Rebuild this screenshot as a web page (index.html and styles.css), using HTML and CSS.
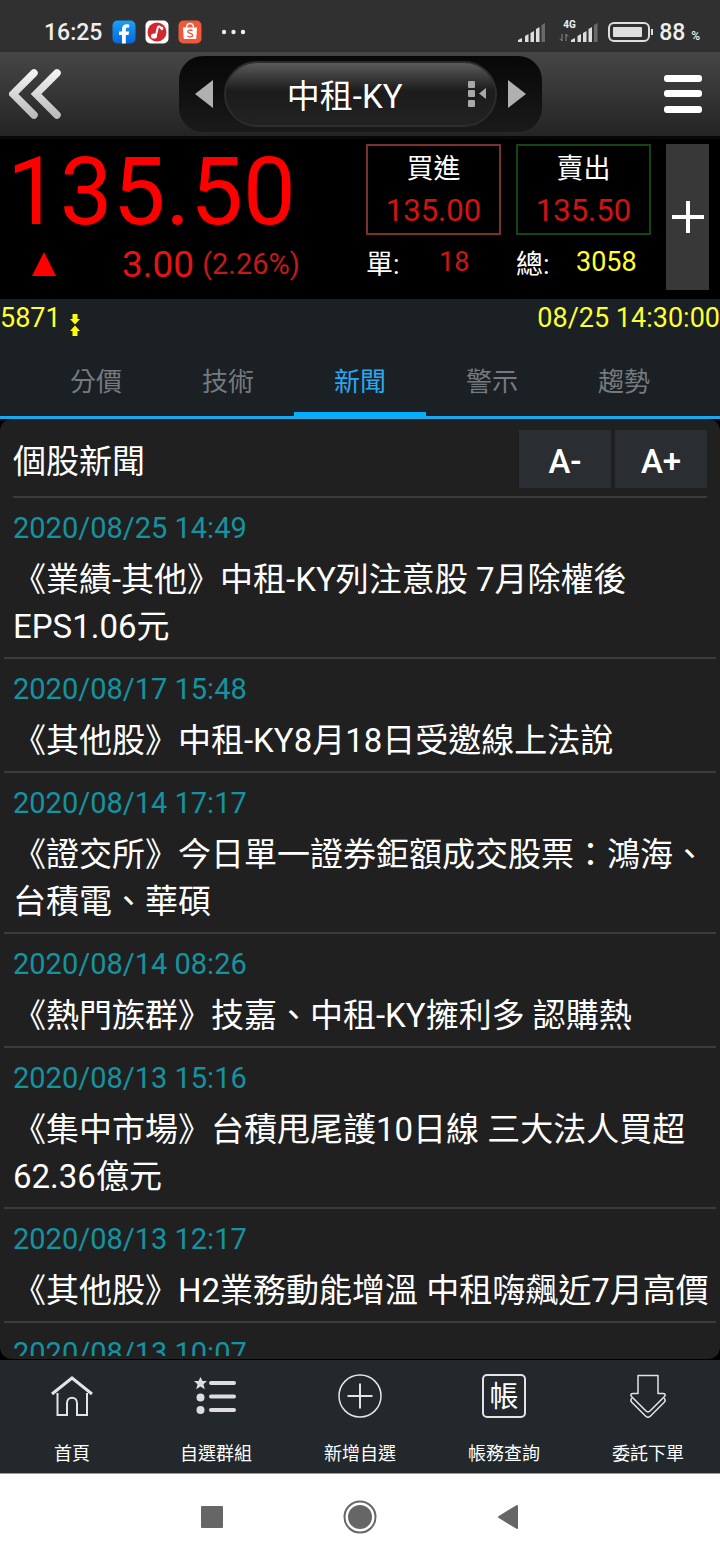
FILE: index.html
```html
<!DOCTYPE html>
<html lang="zh-Hant">
<head>
<meta charset="utf-8">
<meta name="viewport" content="width=device-width, initial-scale=1">
<title>中租-KY 個股新聞</title>
<link rel="stylesheet" href="styles.css">
</head>
<body>
<div class="status">
  <span class="clock">16:25</span>
  <svg class="app" viewBox="0 0 24 24" aria-hidden="true"><defs><linearGradient id="fb" x1="0" y1="0" x2="0" y2="1"><stop offset="0" stop-color="#18a2f6"/><stop offset="1" stop-color="#0866dc"/></linearGradient></defs><rect x=".5" y=".5" width="23" height="23" rx="5" fill="url(#fb)"/><path d="M10 23.5v-8.500H7v-3.500h3V9c0-3.200 1.800-4.800 4.800-4.800l2.400.2v3h-1.600c-1.400 0-1.800.8-1.800 1.800v2.300h3.300l-.6 3.500h-2.700v8.500z" fill="#fff"/></svg>
  <svg class="app" viewBox="0 0 24 24" aria-hidden="true"><rect x=".5" y=".5" width="23" height="23" rx="5" fill="#fff"/><circle cx="12" cy="12" r="9.500" fill="#d3272f"/><ellipse cx="9" cy="16" rx="3" ry="2.600" fill="#fff"/><path d="M10.800 16 12.800 7.500c.2-1 1.400-1.500 2.200-.6l2.500 3" fill="none" stroke="#fff" stroke-width="2"/><circle cx="17" cy="8" r="1.300" fill="#fff"/></svg>
  <svg class="app" viewBox="0 0 24 24" aria-hidden="true"><rect x=".5" y=".5" width="23" height="23" rx="5" fill="#f0583a"/><path d="M5 7.500h14l-.8 11.500H5.800z" fill="#fff"/><path d="M8.500 8c0-6 7-6 7 0" fill="none" stroke="#fff" stroke-width="1.300"/><path d="M14.500 10.800c-1.500-1.300-4.800-1-4.700 1 .1 2 5 1.300 4.900 3.600-.1 2-3.500 2-5.300.6" fill="none" stroke="#e8543a" stroke-width="1.300"/></svg>
  <svg class="dots" viewBox="0 0 26 24" aria-hidden="true"><g fill="#eee"><circle cx="3" cy="12" r="2.200"/><circle cx="12.500" cy="12" r="2.200"/><circle cx="22" cy="12" r="2.200"/></g></svg>
  <svg class="signal" viewBox="0 0 28 20" aria-hidden="true"><g fill="#ddd"><path d="M0 20v-2l4-2v4zM7 20v-6l3.500-2v8zM12.500 20v-9l3.500-2v11zM18 20V7l3.500-2v15z"/><path d="M23.500 20V3L27 1v19z" fill="#6a6a6a"/></g></svg>
  <span class="cell"><span class="gen">4G</span><svg class="signal" viewBox="0 0 39 20" aria-hidden="true"><path d="M3 19v-7M3 19l-2-2.500M7 12v7M7 12l2 2.500" stroke="#888" fill="none"/><g fill="#ddd"><path d="M12 20v-2l4-2v4zM18.500 20v-6l3.500-2v8zM24 20v-9l3.500-2v11zM29.500 20V7L33 5v15z"/><path d="M35 20V3l3.500-2v19z" fill="#6a6a6a"/></g></svg></span>
  <svg class="battery" viewBox="0 0 46 20" aria-hidden="true"><rect x="1" y="1" width="40" height="18" rx="5" fill="none" stroke="#ddd" stroke-width="2"/><rect x="5" y="5" width="29" height="10" rx="1" fill="#ddd"/><rect x="43" y="7" width="2" height="6" fill="#ddd"/></svg>
  <span class="charge">88 <small>%</small></span>
</div>

<header class="topbar">
  <button class="back" aria-label="返回"><svg width="54" height="52" viewBox="0 0 54 52"><defs><linearGradient id="sv" x1="0" y1="0" x2="0" y2="1"><stop offset="0" stop-color="#f2f2f2"/><stop offset="1" stop-color="#bdbdbd"/></linearGradient></defs><path d="M25 5 4 26 25 47M48 5 27 26 48 47" fill="none" stroke="url(#sv)" stroke-width="7.500" stroke-linecap="round" stroke-linejoin="miter"/></svg></button>
  <div class="switcher">
    <button aria-label="上一檔"><svg width="18" height="28" viewBox="0 0 18 28"><path d="M18 0v28L0 14z" fill="#b0b0b0"/></svg></button>
    <button class="pill"><span>中租-KY</span><svg width="20" height="28" viewBox="0 0 20 28" aria-hidden="true"><g fill="#a8a8a8"><rect x="1" y="1" width="7" height="7" rx="1"/><rect x="1" y="10" width="7" height="7" rx="1"/><rect x="1" y="20" width="7" height="7" rx="1"/><path d="M19 8v11l-7-5.500z"/></g></svg></button>
    <button aria-label="下一檔"><svg width="18" height="28" viewBox="0 0 18 28"><path d="M0 0v28l18-14z" fill="#b0b0b0"/></svg></button>
  </div>
  <button class="menu" aria-label="選單"><svg width="38" height="40" viewBox="0 0 38 40"><g fill="#fff"><rect y="1" width="38" height="7" rx="3"/><rect y="16" width="38" height="7" rx="3"/><rect y="32" width="38" height="7" rx="3"/></g></svg></button>
</header>

<section class="quote">
  <div class="last">
    <div class="price">135.50</div>
    <div class="change"><svg width="24" height="24" viewBox="0 0 24 24" aria-label="上漲"><path d="M12 0l12 24H0z" fill="#f00"/></svg><span class="diff">3.00</span><span class="pct">(2.26%)</span></div>
  </div>
  <div class="book">
    <button class="side buy"><span>買進</span><b>135.00</b></button>
    <div class="volume"><span>單:</span><b class="up">18</b></div>
  </div>
  <div class="book">
    <button class="side sell"><span>賣出</span><b>135.50</b></button>
    <div class="volume"><span>總:</span><b class="total">3058</b></div>
  </div>
  <button class="add" aria-label="加入"><svg width="32" height="32" viewBox="0 0 32 32"><path d="M0 16h32M16 0v32" stroke="#fff" stroke-width="4"/></svg></button>
</section>

<div class="info">
  <span>5871</span>
  <svg width="10" height="22" viewBox="0 0 10 22" aria-hidden="true"><path d="M2.500 0h5v5H10l-5 5.500L0 5h2.500zM2.500 22h5v-5H10l-5-5.500L0 17h2.500z" fill="#ff0"/></svg>
  <time>08/25 14:30:00</time>
</div>

<nav class="tabs">
  <button>分價</button>
  <button>技術</button>
  <button class="active">新聞</button>
  <button>警示</button>
  <button>趨勢</button>
</nav>

<main class="stage">
  <div class="panel">
    <div class="head">
      <h1>個股新聞</h1>
      <button>A-</button>
      <button>A+</button>
    </div>
    <div class="list">
      <article><time>2020/08/25 14:49</time><h2>《業績-其他》中租-KY列注意股 7月除權後EPS1.06元</h2></article>
      <article><time>2020/08/17 15:48</time><h2>《其他股》中租-KY8月18日受邀線上法說</h2></article>
      <article><time>2020/08/14 17:17</time><h2>《證交所》今日單一證券鉅額成交股票：鴻海、台積電、華碩</h2></article>
      <article><time>2020/08/14 08:26</time><h2>《熱門族群》技嘉、中租-KY擁利多 認購熱</h2></article>
      <article><time>2020/08/13 15:16</time><h2>《集中市場》台積甩尾護10日線 三大法人買超62.36億元</h2></article>
      <article><time>2020/08/13 12:17</time><h2>《其他股》H2業務動能增溫 中租嗨飆近7月高價</h2></article>
      <article><time>2020/08/13 10:07</time></article>
    </div>
  </div>
</main>

<nav class="dock">
  <button><svg width="44" height="44" viewBox="0 0 44 44"><g fill="none" stroke="#e4e4e4" stroke-width="2"><path d="M2 20 22 4l20 16" stroke-width="3"/><path d="M7.500 19v22H17V29c0-7 10-7 10 0v12h10V19"/></g></svg>首頁</button>
  <button><svg width="44" height="44" viewBox="0 0 44 44"><g fill="#ddd"><path d="m6.500 3 2 4h4.500l-3.500 3.300 1.300 5-4.300-2.800-4.300 2.800 1.300-5L0 7h4.500z"/><circle cx="6.500" cy="23.500" r="4"/><circle cx="6.500" cy="36" r="4"/><rect x="15" y="7" width="27" height="4" rx="2"/><rect x="15" y="20.500" width="27" height="4" rx="2"/><rect x="15" y="34" width="27" height="4" rx="2"/></g></svg>自選群組</button>
  <button><svg width="44" height="44" viewBox="0 0 44 44"><g fill="none" stroke="#e4e4e4"><circle cx="22" cy="22" r="21" stroke-width="1.500"/><path d="M9.500 22h25M22 9.500v25" stroke-width="2"/></g></svg>新增自選</button>
  <button><span class="seal" aria-hidden="true">帳</span>帳務查詢</button>
  <button><svg width="44" height="44" viewBox="0 0 44 44"><g fill="none" stroke="#e4e4e4" stroke-width="1.500" stroke-linejoin="round"><path d="M12 1.500h20v18h5c2 0 3 1.500 1.500 3L24 37c-1.500 1.300-2.500 1.300-4 0L5.500 22.500c-1.500-1.500-.5-3 1.500-3h5z"/><path d="M6 24c-1.500 1.500-1.500 3 0 4.500L19.500 42c1.500 1.500 3.500 1.500 5 0L38 28.500c1.500-1.500 1.500-3 0-4.500"/></g></svg>委託下單</button>
</nav>

<div class="system">
  <button aria-label="最近使用"><svg width="22" height="22" viewBox="0 0 22 22"><rect width="22" height="22" rx="1" fill="#666"/></svg></button>
  <button aria-label="主畫面"><svg width="34" height="34" viewBox="0 0 34 34"><circle cx="17" cy="17" r="15.500" fill="none" stroke="#666" stroke-width="2"/><circle cx="17" cy="17" r="12" fill="#666"/></svg></button>
  <button aria-label="上一頁"><svg width="22" height="24" viewBox="0 0 22 24"><path d="M20 1v22L2 12z" fill="#666" stroke="#666" stroke-width="2" stroke-linejoin="round"/></svg></button>
</div>
</body>
</html>
```
FILE: styles.css
```css
* { box-sizing: border-box; }

body {
  margin: 0;
  height: 100vh;
  display: flex;
  flex-direction: column;
  background: #000;
  color: #fff;
  font-family: Roboto, "Noto Sans CJK TC", sans-serif;
  text-spacing-trim: space-all;
}

body > * { flex-shrink: 0; }
svg { display: block; flex: none; }

button {
  margin: 0;
  padding: 0;
  border: 0;
  background: none;
  color: inherit;
  font: inherit;
  cursor: pointer;
}

h1, h2 { margin: 0; font-weight: 400; }
b { font-weight: 400; }

/* status bar */
.status {
  display: flex;
  align-items: center;
  height: 52px;
  padding: 12px 20px 0 44px;
  background: #303030;
  color: #eee;
}
.clock { margin-right: 10px; font-size: 23px; font-weight: 500; }
.app { width: 24px; height: 24px; margin-right: 9px; }
.dots { width: 26px; height: 24px; margin-left: 10px; margin-right: auto; }
.signal { height: 20px; }
.cell { position: relative; margin: 0 10px 0 13px; }
.gen {
  position: absolute;
  top: -3px;
  left: 4px;
  font-size: 10px;
  font-weight: 700;
  line-height: 12px;
}
.battery { width: 46px; height: 20px; margin-right: 5px; }
.charge { font-size: 23px; font-weight: 500; }
.charge small { font-size: 12px; }

/* title bar */
.topbar {
  display: grid;
  grid-template-columns: 1fr auto 1fr;
  align-items: center;
  height: 87px;
  padding: 0 18px 0 9px;
  border-bottom: 3px solid #080808;
  background: linear-gradient(#464646, #242424);
}
.topbar { padding: 0 9px; }
.back { justify-self: start; }
.menu { justify-self: end; margin-right: 9px; }
.switcher {
  display: flex;
  align-items: center;
  justify-content: center;
  gap: 11px;
  height: 76px;
  padding: 0 16px;
  border-radius: 24px;
  background: linear-gradient(#070707, #1a1a1a);
}
.pill {
  display: flex;
  align-items: center;
  justify-content: flex-end;
  gap: 64px;
  width: 273px;
  height: 66px;
  padding-right: 8px;
  border: 2px solid #2c2c2c;
  border-radius: 33px;
  background: linear-gradient(#5a5a5a, #1c1c1c 45%, #222);
  font-size: 33px;
}

/* quote */
.quote {
  display: flex;
  align-items: flex-start;
  gap: 15px;
  padding: 5px 11px 9px 7px;
}
.last { flex: 1; color: #f00; }
.price { height: 94px; font-size: 94px; line-height: 96px; }
.change { display: flex; align-items: center; height: 52px; padding-left: 25px; }
.diff { margin-left: 66px; font-size: 37px; color: #e41414; }
.pct { margin-left: 8px; font-size: 29px; color: #c81818; }
.side {
  display: flex;
  flex-direction: column;
  align-items: center;
  width: 135px;
  height: 91px;
  padding-top: 2px;
  border: 2px solid #7c3030;
}
.side span { font-size: 27px; line-height: 42px; }
.side b { font-size: 31px; line-height: 42px; color: #d01414; }
.sell { border-color: #164416; }
.volume { display: flex; align-items: center; height: 54px; font-size: 27px; }
.volume span { width: 60px; }
.volume .up { width: 58px; padding-left: 13px; color: #d01414; }
.total { color: #ff3; }
.add {
  display: flex;
  align-items: center;
  justify-content: center;
  align-self: stretch;
  width: 43px;
  background: #383838;
}

.info {
  display: flex;
  align-items: center;
  gap: 9px;
  height: 38px;
  background: #1a2024;
  color: #ff3;
  font-size: 27px;
}
.info time { margin-left: auto; }
.info svg { margin-top: 14px; }

/* tabs */
.tabs {
  display: flex;
  height: 82px;
  padding: 0 30px;
  border-bottom: 3px solid #18a8ec;
  background: #1a2024;
  color: #747a7d;
  font-size: 26px;
}
.tabs button { flex: 1; padding-top: 10px; border-bottom: 4px solid transparent; }
.tabs .active { border-color: #00b0ff; color: #28a8f0; }

/* news */
.stage { flex: 1 1 0; min-height: 0; padding-bottom: 1px; }
.panel {
  display: flex;
  flex-direction: column;
  height: 100%;
  padding-bottom: 3px;
  border-radius: 12px;
  background: #202020;
}
.head {
  display: flex;
  align-items: center;
  gap: 4px;
  height: 79px;
  margin: 0 13px;
  padding-top: 2px;
  border-bottom: 2px solid #3c3c3c;
}
.head h1 { flex: 1; font-size: 33px; }
.head button {
  width: 92px;
  height: 58px;
  padding-top: 6px;
  background: #2a2e32;
  font-size: 33px;
  font-weight: 500;
}
.list { flex: 1 1 0; min-height: 0; overflow-y: auto; scrollbar-width: none; padding: 0 4px; }
article { padding: 12px 0 7px 9px; border-bottom: 2px solid #3c3c3c; }
article time { display: block; color: #1493a0; font-size: 29px; line-height: 36px; }
article h2 { margin-top: 10px; font-size: 33px; line-height: 47px; }

/* bottom navigation */
.dock {
  display: flex;
  height: 114px;
  border-bottom: 1px solid #999;
  background: #23282c;
  font-size: 18px;
}
.dock button {
  flex: 1;
  display: flex;
  flex-direction: column;
  align-items: center;
  gap: 21px;
  padding-top: 14px;
  line-height: 30px;
}
.seal {
  width: 44px;
  height: 44px;
  border: 2px solid #e4e4e4;
  border-radius: 5px;
  font-size: 29px;
  line-height: 42px;
}

.system {
  display: flex;
  justify-content: center;
  align-items: center;
  height: 86px;
  background: #fff;
}
.system button { display: flex; justify-content: center; width: 148px; }
```
